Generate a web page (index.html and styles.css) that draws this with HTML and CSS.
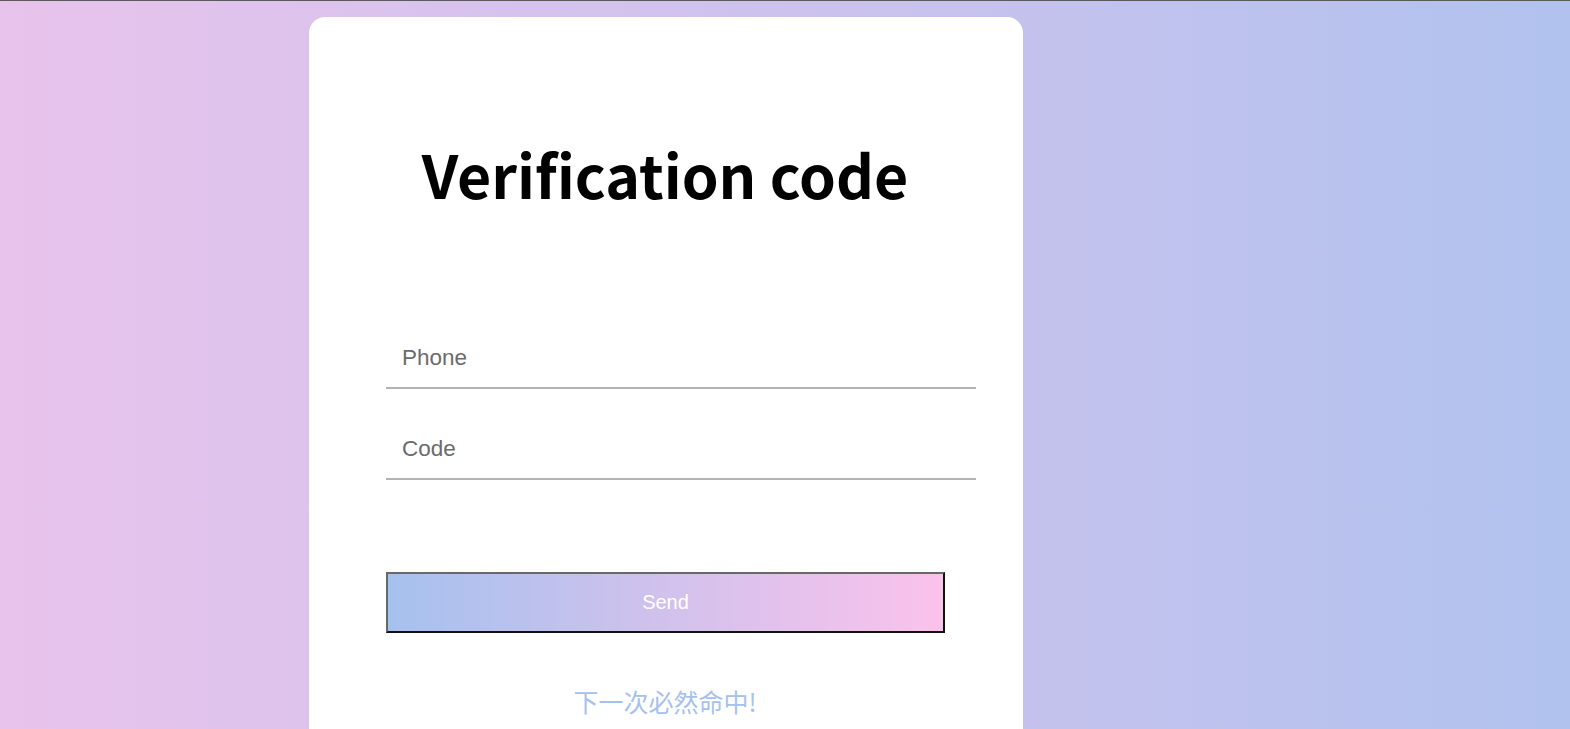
FILE: index.html
```html
<!DOCTYPE html>
<html lang="en">
<head>
<meta charset="utf-8">
<title>Verification code</title>
<link rel="stylesheet" href="styles.css">
</head>
<body>
<div class="page">
  <div class="card">
    <h1 class="title">Verification code</h1>
    <form class="form">
      <input class="field" type="text" placeholder="Phone">
      <input class="field" type="text" placeholder="Code">
      <button class="send" type="button">Send</button>
    </form>
    <p class="note">下一次必然命中!</p>
  </div>
</div>
</body>
</html>
```

FILE: styles.css
```css
html, body {
  margin: 0;
  padding: 0;
  height: 100%;
  overflow: hidden;
}

body {
  border-top: 1px solid #5a5a5a;
  box-sizing: border-box;
  background: linear-gradient(to right, #e8c3ec 0%, #b1c2ee 100%);
}

.page {
  padding-top: 16px;
  padding-left: 309px;
}

.card {
  width: 714px;
  height: 800px;
  box-sizing: border-box;
  background: #ffffff;
  border-radius: 16px;
  padding: 112px 46px 0 77px;
}

.title {
  margin: 0 0 0 -77px;
  width: 712px;
  text-align: center;
  font-family: "Noto Sans CJK SC", "Noto Sans", sans-serif;
  font-weight: 700;
  font-size: 59px;
  line-height: 90px;
  color: #000;
}

.form {
  margin-top: 110px;
  display: flex;
  flex-direction: column;
  align-items: flex-start;
}

.field {
  display: block;
  width: 590px;
  height: 60px;
  box-sizing: border-box;
  border: none;
  border-bottom: 2px solid #b3b3b3;
  padding: 0 16px;
  margin: 0 0 31px 0;
  outline: none;
  font-family: "Liberation Sans", Arial, sans-serif;
  font-size: 22.5px;
  color: #333;
  background: transparent;
}

.field::placeholder {
  color: #6b6b6b;
}

.send {
  margin-top: 61px;
  width: 559px;
  height: 61px;
  box-sizing: border-box;
  border-width: 2px;
  border-style: solid;
  border-color: #686868 #111 #111 #686868;
  background: linear-gradient(to right, #a6c1ee, #fbc2eb);
  color: #fff;
  font-family: "Liberation Sans", Arial, sans-serif;
  font-size: 20px;
  cursor: pointer;
}

.note {
  margin: 51px 0 0 -77px;
  width: 712px;
  text-align: center;
  font-family: "Noto Sans CJK SC", sans-serif;
  font-size: 25px;
  line-height: 34px;
  color: #a6c1ee;
}
```
